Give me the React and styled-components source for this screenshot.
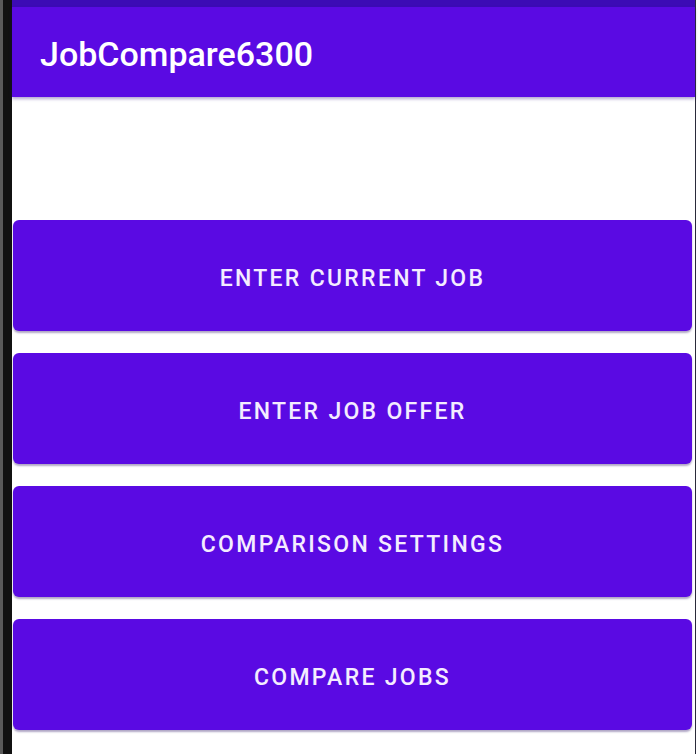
import React from "react";
import styled, { createGlobalStyle } from "styled-components";

const GlobalStyle = createGlobalStyle`
  html, body {
    margin: 0;
    padding: 0;
    background: #ffffff;
  }
  body {
    font-family: Roboto, "Liberation Sans", sans-serif;
  }
`;

const Frame = styled.div`
  display: flex;
  width: 698px;
  height: 754px;
  overflow: hidden;
  background: #ffffff;
`;

const Bezel = styled.div`
  width: 9px;
  flex-shrink: 0;
  background: #111111;
  border-left: 3px solid #5a5a5a;
`;

const Screen = styled.div`
  display: flex;
  flex-direction: column;
  width: 683px;
  flex-shrink: 0;
  background: #ffffff;
  border-right: 1px solid #2a2a3a;
`;

const StatusBar = styled.div`
  height: 7px;
  background: #3c0bb5;
`;

const AppBar = styled.header`
  display: flex;
  align-items: center;
  height: 90px;
  padding: 3px 28px 0;
  box-sizing: border-box;
  background: #5a0ae3;
  box-shadow: 0 2px 3px rgba(40, 0, 120, 0.35);
  position: relative;
  z-index: 1;
`;

const Title = styled.h1`
  margin: 0;
  color: #ffffff;
  font-family: Roboto, "Liberation Sans", sans-serif;
  font-weight: 500;
  font-size: 34px;
  letter-spacing: 0;
`;

const ButtonList = styled.div`
  display: flex;
  flex-direction: column;
  gap: 22px;
  padding: 123px 3px 0 1px;
`;

const ActionButton = styled.button`
  display: flex;
  align-items: center;
  justify-content: center;
  height: 111px;
  padding: 5px 0 0;
  border: none;
  border-radius: 6px;
  background: #5a0ae3;
  color: #f4ecff;
  font-family: Roboto, "Liberation Sans", sans-serif;
  font-weight: 500;
  font-size: 23px;
  letter-spacing: 2.3px;
  text-transform: uppercase;
  box-shadow: 0 2px 2px rgba(30, 0, 90, 0.35);
  cursor: pointer;
`;

const actions = [
  "Enter Current Job",
  "Enter Job Offer",
  "Comparison Settings",
  "Compare Jobs",
];

export default function App() {
  return (
    <>
      <GlobalStyle />
      <Frame>
        <Bezel />
        <Screen>
          <StatusBar />
          <AppBar>
            <Title>JobCompare6300</Title>
          </AppBar>
          <ButtonList>
            {actions.map((label) => (
              <ActionButton key={label}>{label}</ActionButton>
            ))}
          </ButtonList>
        </Screen>
      </Frame>
    </>
  );
}
